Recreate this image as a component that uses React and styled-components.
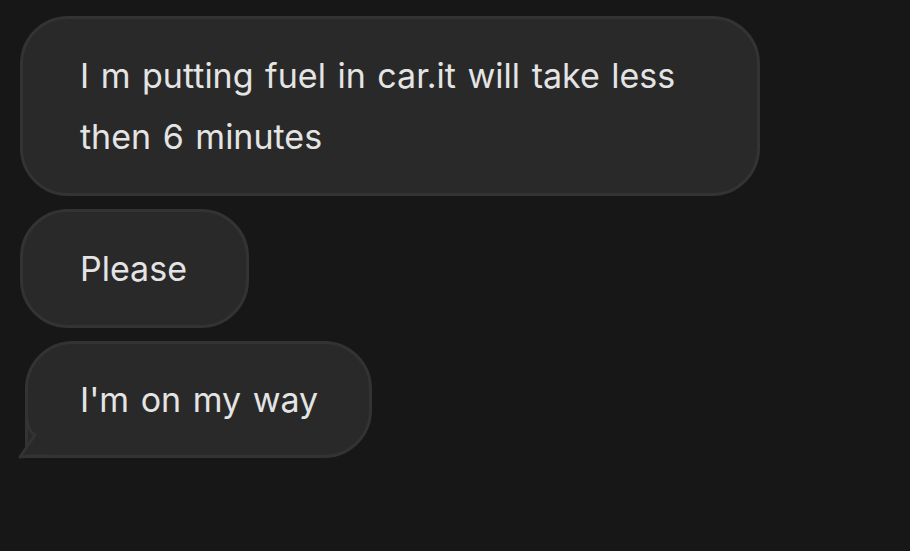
import React from "react";
import styled, { createGlobalStyle } from "styled-components";

const Global = createGlobalStyle`
  html, body {
    margin: 0;
    padding: 0;
    background: #171717;
  }
  body {
    font-family: Inter, "Noto Sans", sans-serif;
  }
`;

const Page = styled.div`
  width: 910px;
  height: 551px;
  background: #171717;
  padding: 16px 0 0 20px;
  box-sizing: border-box;
  display: flex;
  flex-direction: column;
  align-items: flex-start;
  gap: 13px;
`;

const Bubble = styled.div`
  position: relative;
  box-sizing: border-box;
  max-width: 740px;
  width: ${(p) => (p.$wide ? "740px" : "auto")};
  margin-left: ${(p) => (p.$tail ? "5px" : "0")};
  padding: ${(p) =>
    p.$tail ? "25px 51px 25px 52px" : "26px 59px 26px 57px"};
  background: #292929;
  border: 3px solid #333333;
  border-radius: ${(p) => (p.$tail ? "48px 48px 48px 0" : "48px")};
  color: #e4e4e4;
  font-size: 34px;
  line-height: 61px;
  word-spacing: 2px;
  font-weight: 400;
`;

const Tail = styled.svg`
  position: absolute;
  left: -11px;
  bottom: -6px;
  width: 50px;
  height: 50px;
  overflow: visible;
`;

function TailShape() {
  return (
    <Tail viewBox="0 0 50 50">
      <path
        d="M9.5 0 L9.5 2 Q10 20 18 24 L3 46 Q20 44 42 45.5 L50 45.5 L50 0 Z"
        fill="#292929"
      />
      <path
        d="M9.5 0 L9.5 2 Q10 20 18 24 L3 46 Q20 44 42 45.5 L50 45.5"
        fill="none"
        stroke="#333333"
        strokeWidth="3"
        strokeLinejoin="round"
      />
    </Tail>
  );
}

export default function App() {
  return (
    <>
      <Global />
      <Page>
        <Bubble $wide>I m putting fuel in car.it will take less then 6 minutes</Bubble>
        <Bubble>Please</Bubble>
        <Bubble $tail>
          I'm on my way
          <TailShape />
        </Bubble>
      </Page>
    </>
  );
}
